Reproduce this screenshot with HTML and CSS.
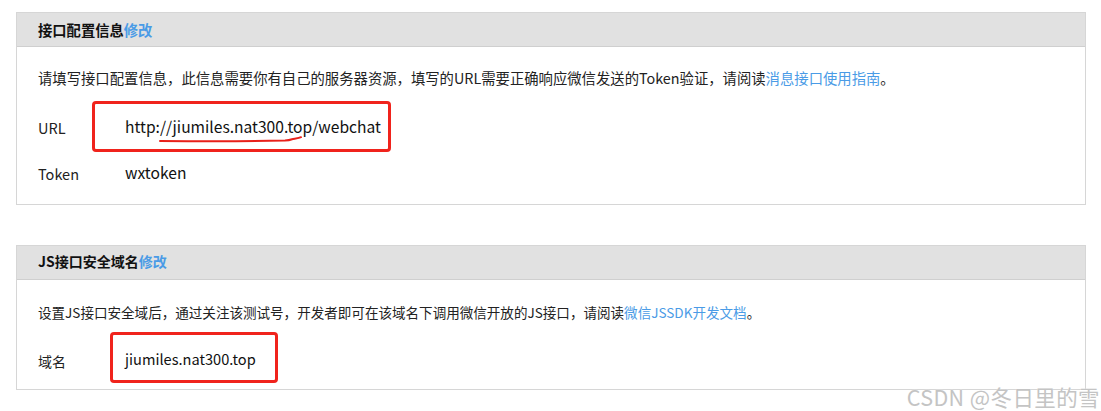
FILE: index.html
```html
<!DOCTYPE html>
<html lang="zh-CN">
<head>
<meta charset="utf-8">
<link rel="stylesheet" href="styles.css">
</head>
<body>
<div class="page">
  <section class="panel panel-1">
    <div class="panel-head">接口配置信息<a class="link">修改</a></div>
    <div class="panel-body">
      <p class="desc">请填写接口配置信息，此信息需要你有自己的服务器资源，填写的URL需要正确响应微信发送的Token验证，请阅读<a class="link">消息接口使用指南</a>。</p>
      <div class="row">
        <span class="label">URL</span>
        <span class="value">http://jiumiles.nat300.top/webchat</span>
        <span class="mark mark-url"></span>
        <svg class="scribble" width="150" height="10" viewBox="0 0 150 10"><path d="M1 7 C 40 7.5, 90 7.5, 126 6.5 C 130 6.3, 131 6, 133 5.2 C 136 4.6, 140 4.2, 142 3.2" fill="none" stroke="#e8201a" stroke-width="2" stroke-linecap="round"/></svg>
      </div>
      <div class="row">
        <span class="label">Token</span>
        <span class="value">wxtoken</span>
      </div>
    </div>
  </section>

  <section class="panel panel-2">
    <div class="panel-head">JS接口安全域名<a class="link">修改</a></div>
    <div class="panel-body">
      <p class="desc">设置JS接口安全域后，通过关注该测试号，开发者即可在该域名下调用微信开放的JS接口，请阅读<a class="link">微信JSSDK开发文档</a>。</p>
      <div class="row">
        <span class="label">域名</span>
        <span class="value">jiumiles.nat300.top</span>
        <span class="mark mark-domain"></span>
      </div>
    </div>
  </section>
</div>
<div class="watermark">CSDN @冬日里的雪</div>
</body>
</html>
```

FILE: styles.css
```css
html, body {
  margin: 0;
  padding: 0;
  background: #ffffff;
}
body {
  font-family: "Noto Sans CJK SC", "Open Sans", sans-serif;
  color: #222222;
  width: 1101px;
  height: 411px;
  overflow: hidden;
  position: relative;
}
.page {
  padding: 12px 0 0 16px;
  display: flex;
  flex-direction: column;
  gap: 40px;
}
.panel {
  width: 1068px;
  border: 1px solid #d6d6d6;
  background: #fff;
}
.panel-head {
  background: #e1e1e1;
  border-bottom: 1px solid #cfcfcf;
  display: flex;
  align-items: center;
  padding-left: 21px;
  padding-bottom: 1px;
  box-sizing: border-box;
  height: 34px;
  font-weight: 700;
  color: #111;
}
.panel-1 .panel-head {
  font-size: 14.3px;
}
.panel-2 .panel-head {
  font-size: 14px;
  padding-bottom: 3px;
}
.link {
  color: #4a9be6;
  text-decoration: none;
}
.panel-body {
  padding: 21px 21px 8px;
}
.panel-2 .panel-body {
  padding-top: 22px;
  padding-bottom: 6px;
}
.desc {
  margin: 0 0 16px;
  line-height: 20px;
  color: #222;
}
.panel-1 .desc {
  font-size: 14.35px;
}
.panel-2 .desc {
  font-size: 13.55px;
  margin-bottom: 15px;
}
.row {
  position: relative;
  height: 46px;
  display: flex;
  align-items: center;
  font-size: 14px;
}
.panel-1 .row {
  font-size: 14.5px;
}
.label {
  width: 87px;
  flex: none;
  padding-top: 1px;
}
.value {
  color: #111;
  margin-top: -3px;
}
.panel-1 .value {
  font-size: 15.6px;
}
.panel-2 .value {
  font-size: 14.6px;
}
.mark {
  position: absolute;
  border: 3px solid #f0231c;
  border-radius: 4px;
  box-sizing: border-box;
}
.mark-url {
  left: 54px;
  top: -3px;
  width: 299px;
  height: 51px;
}
.mark-domain {
  left: 72px;
  top: -5px;
  width: 168px;
  height: 51px;
}
.scribble {
  position: absolute;
  left: 121px;
  top: 30px;
}
.watermark {
  position: absolute;
  right: 1px;
  top: 385px;
  line-height: 24px;
  font-family: "Noto Sans CJK SC", sans-serif;
  font-size: 21.5px;
  color: #c4c4c4;
  letter-spacing: 0.4px;
  text-shadow: 0 0 1px #ffffff;
  white-space: nowrap;
}
```
